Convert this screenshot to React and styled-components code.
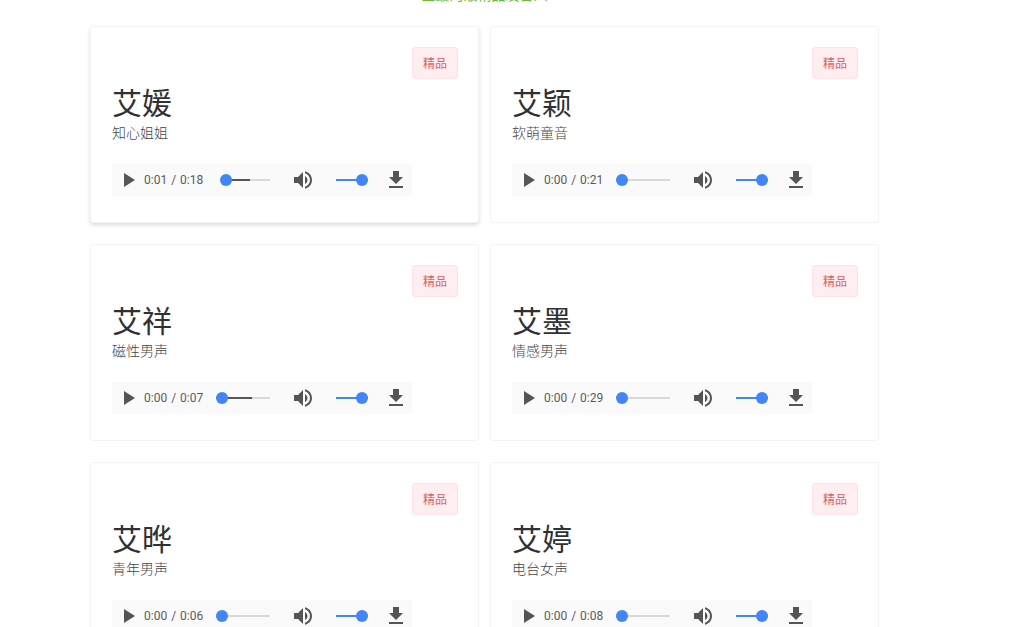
import React, { useState } from "react";
import styled, { createGlobalStyle } from "styled-components";

const GlobalStyle = createGlobalStyle`
  * { box-sizing: border-box; }
  body {
    margin: 0;
    background: #fff;
    color: #303133;
    font-family: "Noto Sans CJK SC", sans-serif;
    overflow: hidden;
  }
`;

const Page = styled.main`
  padding: 0 145px 0 90px;
`;

const Heading = styled.h1`
  margin: -16px 0 22px;
  font-size: 14px;
  line-height: 20px;
  font-weight: 400;
  text-align: center;
  color: #67b93e;
`;

const Grid = styled.div`
  display: grid;
  grid-template-columns: 1fr 1fr;
  gap: 21px 11px;
`;

const Card = styled.article`
  display: flex;
  flex-direction: column;
  align-items: flex-start;
  height: 197px;
  padding: 20px 20px 20px 21px;
  border: 1px solid ${(p) => (p.$raised ? "#f4f4f4" : "#f3f3f4")};
  border-radius: 3px;
  background: #fff;
  box-shadow: ${(p) => (p.$raised ? "0 2px 4px rgba(0, 0, 0, 0.14)" : "none")};
`;

const Badge = styled.span`
  align-self: flex-end;
  height: 32px;
  padding: 0 10px;
  border: 1px solid #fde2e6;
  border-radius: 3px;
  background: #feeef0;
  color: #e25f60;
  font-size: 12px;
  line-height: 30px;
`;

const Name = styled.h2`
  margin: 2px 0 0;
  font-size: 30px;
  line-height: 40px;
  font-weight: 400;
`;

const Tag = styled.p`
  margin: 0 0 22px;
  padding-top: 1px;
  font-size: 14px;
  line-height: 20px;
  font-weight: 300;
  color: #444;
`;

const Player = styled.div`
  display: flex;
  align-items: center;
  width: 300px;
  height: 32px;
  background: #fafafa;
`;

const IconButton = styled.button`
  display: flex;
  align-items: center;
  justify-content: center;
  width: 32px;
  height: 32px;
  padding: 0;
  border: 0;
  background: none;
  color: #555;
`;

const PlayButton = styled(IconButton)`
  padding-left: 2px;
`;

const Time = styled.span`
  display: flex;
  gap: 4px;
  width: 72px;
  font-family: Roboto, sans-serif;
  font-size: 12px;
  line-height: 16px;
  color: #5a5a5a;
`;

const Slider = styled.input`
  appearance: none;
  width: ${(p) => p.$width}px;
  height: 12px;
  margin: 0 ${(p) => p.$after}px 0 ${(p) => p.$before || 0}px;
  background: linear-gradient(
      to right,
      transparent ${(p) => p.$start || 0}%,
      ${(p) => p.$fill} ${(p) => p.$start || 0}%,
      ${(p) => p.$fill} ${(p) => p.$loaded}%,
      #d9d9d9 ${(p) => p.$loaded}%
    )
    center / 100% 2px no-repeat;

  &::-webkit-slider-thumb {
    appearance: none;
    width: 12px;
    height: 12px;
    border-radius: 50%;
    background: #4285f4;
  }
`;

const Icon = ({ d }) => (
  <svg width="24" height="24" viewBox="0 0 24 24" fill="currentColor" aria-hidden="true">
    <path d={d} />
  </svg>
);

const PLAY = "M7 5v14l11-7z";
const VOLUME =
  "M3 9v6h4l5 5V4L7 9H3zm13.5 3c0-1.77-1.02-3.29-2.5-4.03v8.05c1.48-.73 2.5-2.25 2.5-4.02zM14 3.23v2.06c2.89.86 5 3.54 5 6.71s-2.11 5.85-5 6.71v2.06c4.01-.91 7-4.49 7-8.77s-2.99-7.86-7-8.77z";
const DOWNLOAD = "M19 9h-4V3H9v6H5l7 7 7-7zM5 18v2h14v-2H5z";

const VOICES = [
  { name: "艾媛", tag: "知心姐姐", played: "0:01", total: "0:18", position: 10, loaded: 63, raised: true },
  { name: "艾颖", tag: "软萌童音", played: "0:00", total: "0:21", position: 0, loaded: 0 },
  { name: "艾祥", tag: "磁性男声", played: "0:00", total: "0:07", position: 0, loaded: 67 },
  { name: "艾墨", tag: "情感男声", played: "0:00", total: "0:29", position: 0, loaded: 0 },
  { name: "艾晔", tag: "青年男声", played: "0:00", total: "0:06", position: 0, loaded: 0 },
  { name: "艾婷", tag: "电台女声", played: "0:00", total: "0:08", position: 0, loaded: 0 },
];

function VoiceCard({ voice }) {
  const [position, setPosition] = useState(voice.position);
  const [volume, setVolume] = useState(100);
  return (
    <Card $raised={voice.raised}>
      <Badge>精品</Badge>
      <Name>{voice.name}</Name>
      <Tag>{voice.tag}</Tag>
      <Player>
        <PlayButton type="button" aria-label={`播放 ${voice.name}`}>
          <Icon d={PLAY} />
        </PlayButton>
        <Time>
          <span>{voice.played}</span>
          <span>/</span>
          <span>{voice.total}</span>
        </Time>
        <Slider
          type="range"
          aria-label="播放进度"
          value={position}
          onChange={(e) => setPosition(Number(e.target.value))}
          $width={54}
          $after={17}
          $fill="#555"
          $start={position}
          $loaded={voice.loaded}
        />
        <IconButton type="button" aria-label="静音">
          <Icon d={VOLUME} />
        </IconButton>
        <Slider
          type="range"
          aria-label="音量"
          value={volume}
          onChange={(e) => setVolume(Number(e.target.value))}
          $width={32}
          $before={17}
          $after={12}
          $fill="#4285f4"
          $loaded={volume}
        />
        <IconButton type="button" aria-label={`下载 ${voice.name}`}>
          <Icon d={DOWNLOAD} />
        </IconButton>
      </Player>
    </Card>
  );
}

export default function App() {
  return (
    <>
      <GlobalStyle />
      <Page>
        <Heading>全最的级精品发音人</Heading>
        <Grid>
          {VOICES.map((voice) => (
            <VoiceCard key={voice.name} voice={voice} />
          ))}
        </Grid>
      </Page>
    </>
  );
}
